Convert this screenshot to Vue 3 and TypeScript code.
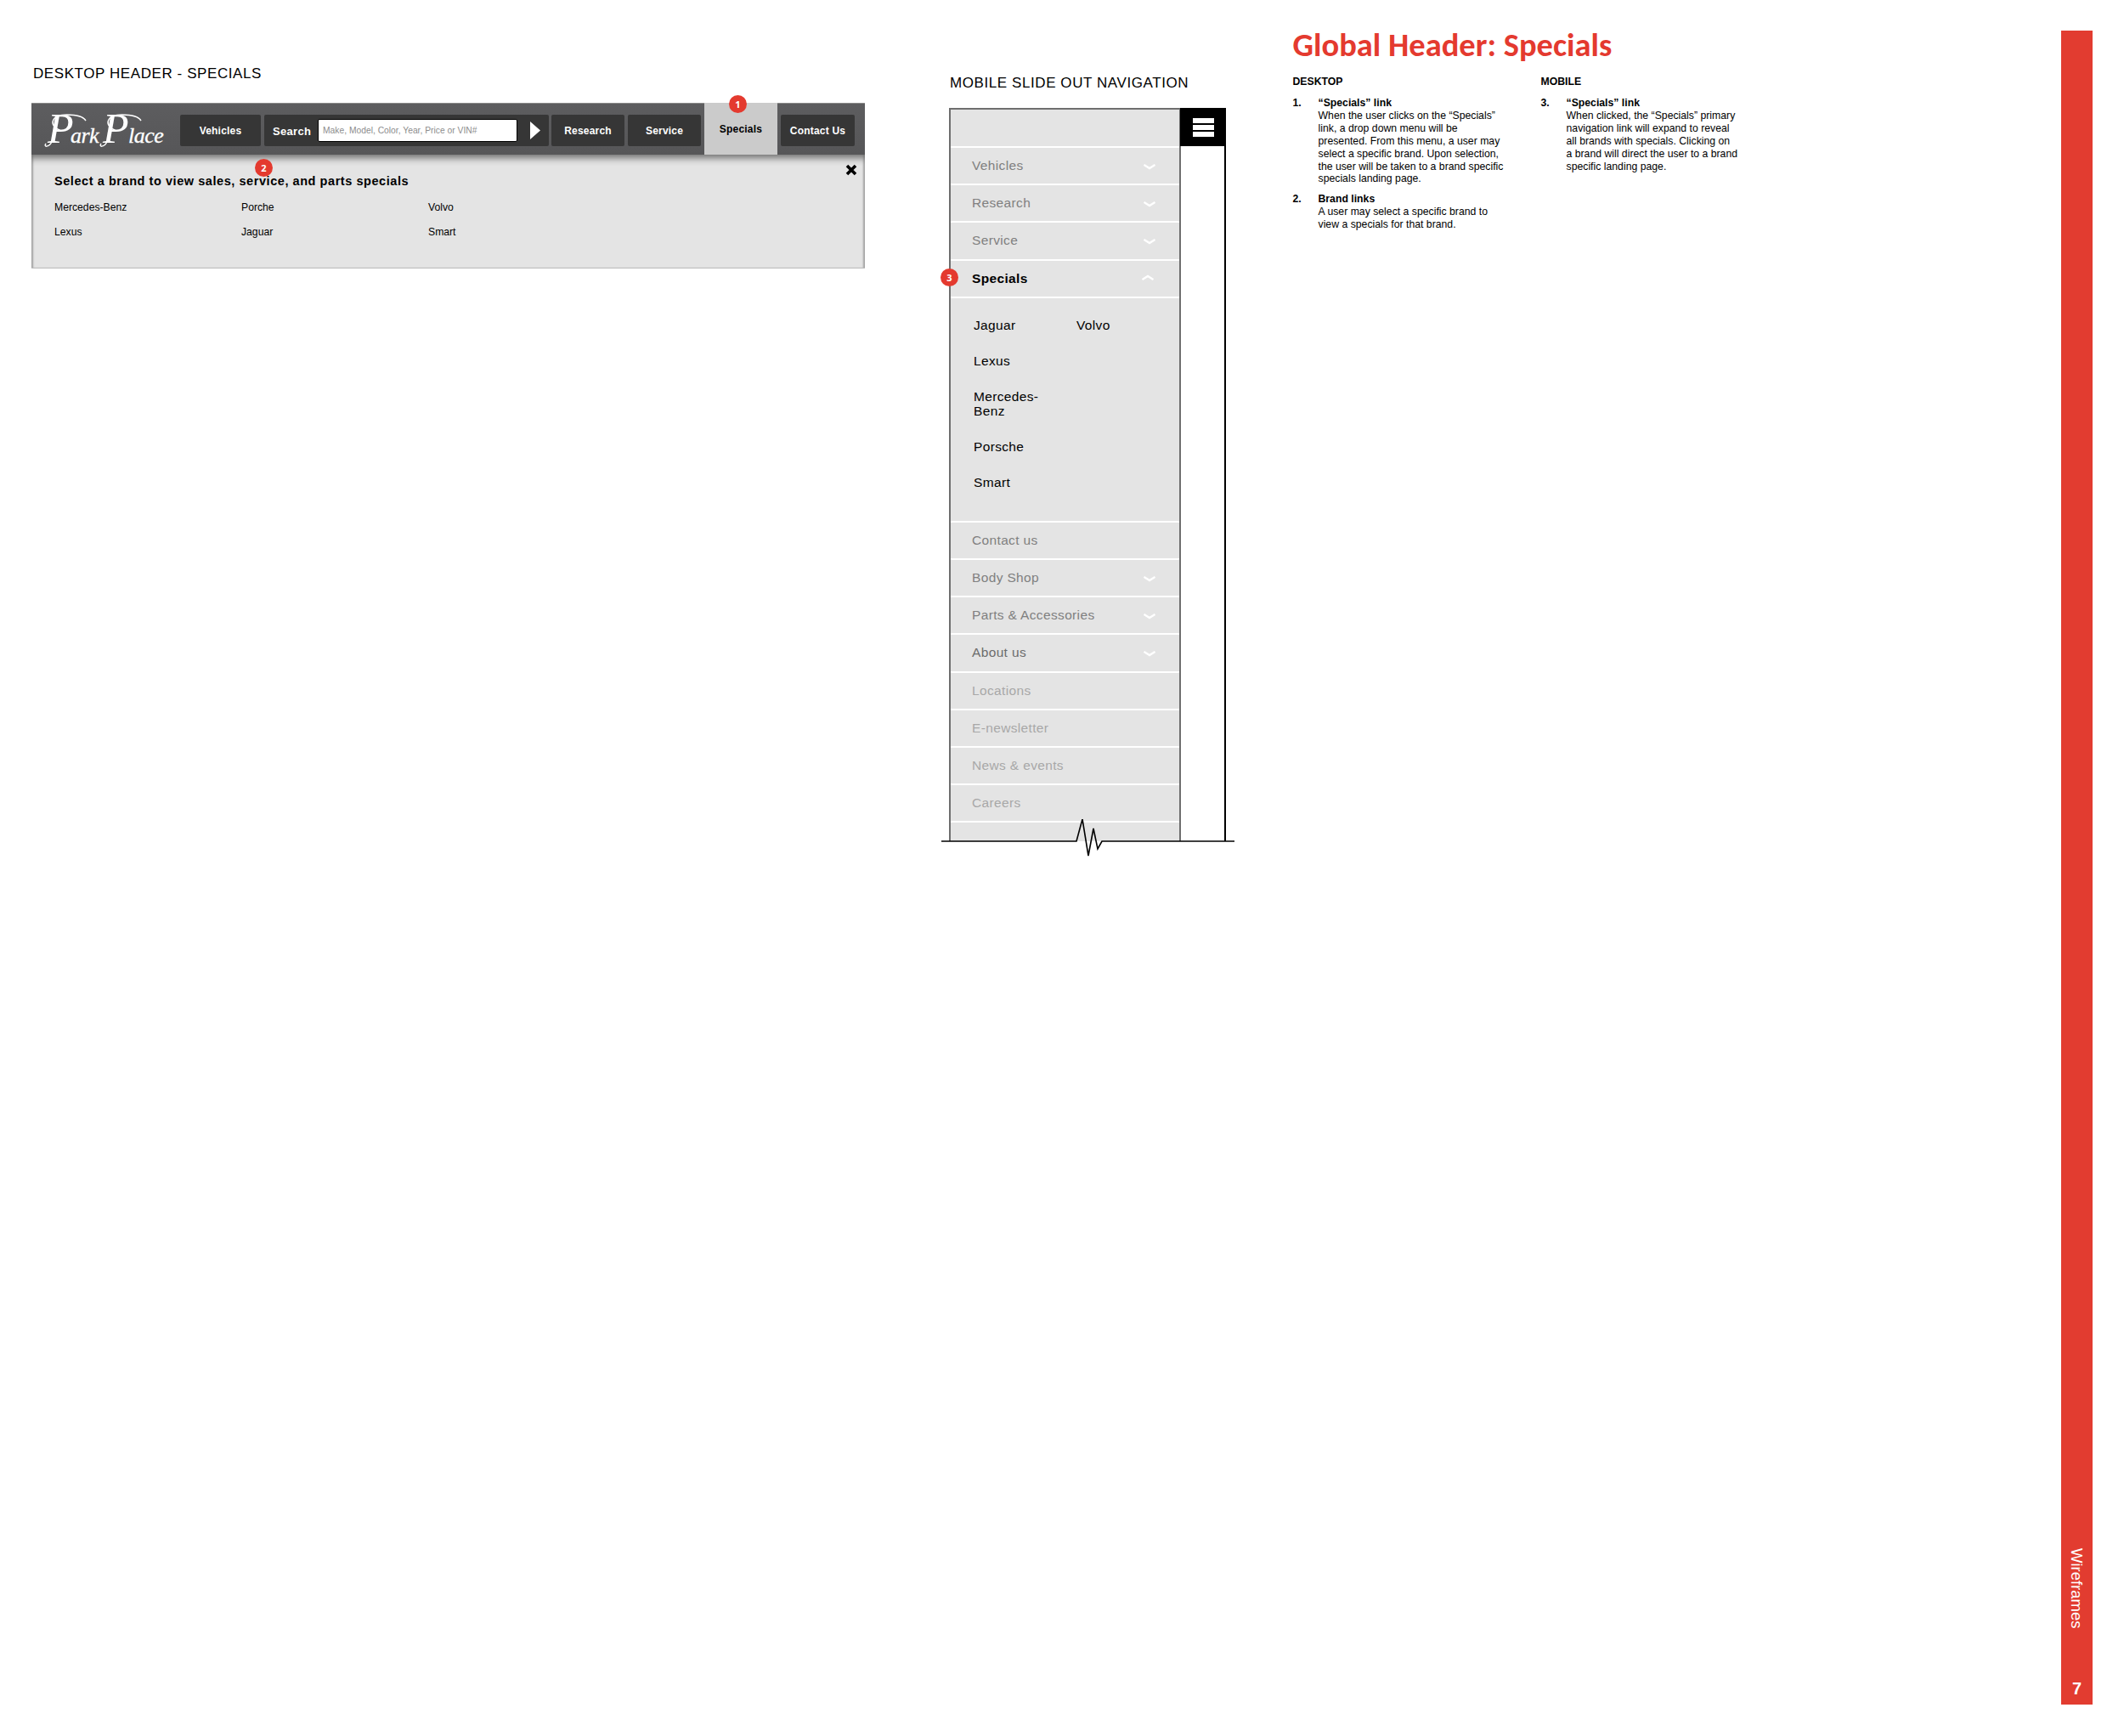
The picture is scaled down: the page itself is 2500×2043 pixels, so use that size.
<script setup lang="ts">
interface MenuRow {
  label: string
  tone: 'mid' | 'dark' | 'light'
  chevron: boolean
}

const topRows: MenuRow[] = [
  { label: 'Vehicles', tone: 'mid', chevron: true },
  { label: 'Research', tone: 'mid', chevron: true },
  { label: 'Service', tone: 'mid', chevron: true },
]

const bottomRows: MenuRow[] = [
  { label: 'Contact us', tone: 'mid', chevron: false },
  { label: 'Body Shop', tone: 'mid', chevron: true },
  { label: 'Parts & Accessories', tone: 'mid', chevron: true },
  { label: 'About us', tone: 'dark', chevron: true },
  { label: 'Locations', tone: 'light', chevron: false },
  { label: 'E-newsletter', tone: 'light', chevron: false },
  { label: 'News & events', tone: 'light', chevron: false },
  { label: 'Careers', tone: 'light', chevron: false },
]

const brands = ['Mercedes-Benz', 'Porche', 'Volvo', 'Lexus', 'Jaguar', 'Smart']
</script>

<template>
  <div class="page">
    <section class="desktop">
      <h2 class="caption">DESKTOP HEADER - SPECIALS</h2>
      <div class="site-header">
        <div class="bar">
          <div class="logo">
            <svg class="logo-svg" viewBox="0 0 160 50" width="160" height="50">
              <path d="M21 27 C5 21 9 8 28 8 C38 8 46 9 50 15 M10 40 C6 47 0 46 3 42" class="swash" />
              <path d="M86 27 C70 21 74 8 93 8 C103 8 111 9 115 15 M75 40 C71 47 65 46 68 42" class="swash" />
              <text x="5" y="41" class="logo-text logo-cap">P</text>
              <text x="32" y="41" class="logo-text">ark</text>
              <text x="70" y="41" class="logo-text logo-cap">P</text>
              <text x="100" y="41" class="logo-text">lace</text>
            </svg>
          </div>
          <a class="nav-btn w-vehicles">Vehicles</a>
          <div class="search">
            <span class="search-label">Search</span>
            <span class="search-input">Make, Model, Color, Year, Price or VIN#</span>
            <svg class="go" viewBox="0 0 12 21" width="12" height="21"><path d="M0 0 L12 10.5 L0 21 Z" fill="#fff" /></svg>
          </div>
          <a class="nav-btn w-research">Research</a>
          <a class="nav-btn w-service">Service</a>
          <a class="nav-active">Specials<span class="badge badge-one">1</span></a>
          <a class="nav-btn w-contact">Contact Us</a>
        </div>
        <div class="dropdown">
          <span class="badge badge-two">2</span>
          <svg class="close" viewBox="0 0 14 14" width="14" height="14"><path d="M2 2 L12 12 M12 2 L2 12" stroke="#000" stroke-width="3.6" /></svg>
          <h3 class="dropdown-title">Select a brand to view sales, service, and parts specials</h3>
          <ul class="brand-grid">
            <li v-for="b in brands" :key="b">{{ b }}</li>
          </ul>
        </div>
      </div>
    </section>

    <section class="mobile">
      <h2 class="caption">MOBILE SLIDE OUT NAVIGATION</h2>
      <div class="phone">
        <div class="drawer">
          <div class="drawer-top"></div>
          <div v-for="r in topRows" :key="r.label" class="row" :class="r.tone">
            {{ r.label }}
            <svg v-if="r.chevron" class="chev" viewBox="0 0 14 7" width="14" height="7"><path d="M0.5 1 L7 5 L13.5 1" /></svg>
          </div>
          <div class="row open">
            Specials
            <svg class="chev" viewBox="0 0 14 7" width="14" height="7"><path d="M0.5 6 L7 2 L13.5 6" /></svg>
            <span class="badge badge-three">3</span>
          </div>
          <div class="sub">
            <div class="sub-first"><span>Jaguar</span><span>Volvo</span></div>
            <div>Lexus</div>
            <div class="sub-wrap">Mercedes-<br />Benz</div>
            <div>Porsche</div>
            <div>Smart</div>
          </div>
          <div v-for="r in bottomRows" :key="r.label" class="row" :class="r.tone">
            {{ r.label }}
            <svg v-if="r.chevron" class="chev" viewBox="0 0 14 7" width="14" height="7"><path d="M0.5 1 L7 5 L13.5 1" /></svg>
          </div>
        </div>
        <div class="side">
          <div class="burger"><i></i><i></i><i></i></div>
        </div>
        <svg class="tear" viewBox="0 0 345 44" width="345" height="44">
          <path d="M0 26 H159 L166 0 L173 43 L179 11 L184 35 L189 26 H345" />
        </svg>
      </div>
    </section>

    <section class="notes">
      <h1 class="notes-title">Global Header: Specials</h1>
      <div class="notes-cols">
        <div class="col col-left">
          <h4>DESKTOP</h4>
          <div class="note">
            <b>1.</b>
            <p><strong>“Specials” link</strong><br />When the user clicks on the “Specials”<br />link, a drop down menu will be<br />presented. From this menu, a user may<br />select a specific brand. Upon selection,<br />the user will be taken to a brand specific<br />specials landing page.</p>
          </div>
          <div class="note">
            <b>2.</b>
            <p><strong>Brand links</strong><br />A user may select a specific brand to<br />view a specials for that brand.</p>
          </div>
        </div>
        <div class="col">
          <h4>MOBILE</h4>
          <div class="note">
            <b>3.</b>
            <p><strong>“Specials” link</strong><br />When clicked, the “Specials” primary<br />navigation link will expand to reveal<br />all brands with specials. Clicking on<br />a brand will direct the user to a brand<br />specific landing page.</p>
          </div>
        </div>
      </div>
    </section>

    <aside class="tab">
      <span class="tab-label">Wireframes</span>
      <span class="tab-num">7</span>
    </aside>
  </div>
</template>

<style>
html, body { margin: 0; background: #fff; }
</style>

<style scoped>
.page {
  position: relative;
  display: flex;
  width: 2500px;
  height: 2043px;
  overflow: hidden;
  background: #fff;
  font-family: "Liberation Sans", Arial, sans-serif;
  color: #000;
}
.caption {
  margin: 0;
  font-size: 17px;
  font-weight: 400;
  line-height: 20px;
  letter-spacing: 0.58px;
  white-space: nowrap;
}

/* desktop header */
.desktop {
  width: 981px;
  margin-left: 37px;
  padding-top: 77px;
}
.desktop .caption { padding-left: 2px; }
.site-header { margin-top: 24px; }
.bar {
  display: flex;
  align-items: flex-start;
  height: 61px;
  padding-left: 175px;
  position: relative;
  box-sizing: border-box;
  border-top: 1px solid #8a8a8a;
  background: linear-gradient(#5d5d5f, #565658);
}
.logo { position: absolute; left: 14px; top: 5px; }
.logo-svg { overflow: visible; }
.swash { fill: none; stroke: #fff; stroke-width: 1.5; }
.logo-text {
  fill: #fff;
  font-family: "Liberation Serif", serif;
  font-style: italic;
  font-size: 26px;
  letter-spacing: -0.5px;
  stroke: #fff;
  stroke-width: 0.3;
}
.logo-cap { font-size: 50px; stroke-width: 0; }
.nav-btn {
  display: flex;
  align-items: center;
  justify-content: center;
  height: 37px;
  margin-top: 13px;
  border-radius: 2px;
  background: #363636;
  color: #fff;
  font-size: 12px;
  font-weight: 700;
  letter-spacing: 0.2px;
}
.w-vehicles { width: 95px; margin-right: 4px; }
.w-research { width: 86px; margin-left: 3px; margin-right: 4px; }
.w-service { width: 86px; margin-right: 4px; }
.w-contact { width: 87px; margin-left: 4px; }
.search {
  display: flex;
  align-items: center;
  width: 335px;
  height: 37px;
  margin-top: 13px;
  border-radius: 2px;
  background: #363636;
  color: #fff;
}
.search-label {
  width: 63px;
  padding-left: 10px;
  padding-top: 1px;
  box-sizing: border-box;
  font-size: 13px;
  font-weight: 700;
  letter-spacing: 0.3px;
}
.search-input {
  width: 235px;
  height: 27px;
  box-sizing: border-box;
  padding-left: 5px;
  border: 1px solid #000;
  border-radius: 2px;
  background: #fff;
  color: #8d8d8d;
  font-size: 10.3px;
  line-height: 26px;
  white-space: nowrap;
}
.go { margin-left: 15px; }
.nav-active {
  position: relative;
  display: flex;
  align-items: flex-start;
  justify-content: center;
  width: 86px;
  height: 62px;
  margin-top: -1px;
  padding-top: 24px;
  box-sizing: border-box;
  background: #cbcbcb;
  color: #000;
  font-size: 12px;
  font-weight: 700;
  letter-spacing: 0.2px;
}
.badge {
  position: absolute;
  width: 21px;
  height: 21px;
  border-radius: 50%;
  background: #e43a2f;
  color: #fff;
  font-family: "Open Sans", sans-serif;
  font-size: 11px;
  font-weight: 700;
  line-height: 21px;
  text-align: center;
}
.badge-one { left: 29px; top: -9px; }
.badge-two { left: 263px; top: 5px; }
.badge-three { left: -12px; top: 9px; }
.dropdown {
  position: relative;
  height: 134px;
  box-sizing: border-box;
  padding: 21px 27px 0;
  background: #e4e4e4;
  border-bottom: 1px solid #bdbdbd;
  box-shadow: inset 0 10px 8px -6px #6e6e6e, inset 3px 0 2px -1px #a8a8a8, inset -3px 0 2px -1px #a8a8a8;
}
.close { position: absolute; right: 9px; top: 11px; }
.dropdown-title {
  margin: 0;
  font-size: 14.5px;
  font-weight: 700;
  line-height: 20px;
  letter-spacing: 0.56px;
  white-space: nowrap;
}
.brand-grid {
  display: grid;
  grid-template-columns: repeat(3, 220px);
  grid-auto-rows: 29px;
  margin: 7px 0 0;
  padding: 0;
  list-style: none;
  font-size: 12.2px;
  line-height: 29px;
}

/* mobile drawer */
.mobile {
  width: 404.5px;
  margin-left: 99px;
  padding-top: 88px;
}
.mobile .caption { padding-left: 1px; }
.phone {
  position: relative;
  display: flex;
  width: 326px;
  height: 863px;
  margin-top: 19px;
}
.drawer {
  width: 274px;
  height: 863px;
  box-sizing: border-box;
  border-left: 2px solid #6e6e6e;
  border-right: 2px solid #6e6e6e;
  border-top: 2px solid #6e6e6e;
  background: #e4e4e4;
}
.drawer-top { height: 43px; border-bottom: 2px solid #fff; }
.row {
  position: relative;
  display: flex;
  align-items: center;
  height: 42.2px;
  padding-left: 25px;
  border-bottom: 2px solid #fff;
  font-size: 15.5px;
  letter-spacing: 0.35px;
}
.mid { color: #808080; }
.dark { color: #6c6c6c; }
.light { color: #a8a8a8; }
.chev {
  position: absolute;
  left: 227px;
  top: 19px;
  fill: none;
  stroke: #fff;
  stroke-width: 2.4;
}
.open { color: #000; font-weight: 700; }
.open .chev { left: 225px; top: 16px; }
.sub {
  display: flex;
  flex-direction: column;
  gap: 25px;
  height: 264px;
  box-sizing: border-box;
  padding: 23px 0 0 27px;
  border-bottom: 2px solid #fff;
  color: #000;
  font-size: 15.5px;
  letter-spacing: 0.35px;
  line-height: 17px;
}
.sub-first span:first-child { display: inline-block; width: 121px; }
.side {
  position: relative;
  width: 53px;
  height: 863px;
  box-sizing: border-box;
  border-right: 2px solid #000;
}
.burger {
  display: flex;
  flex-direction: column;
  gap: 2px;
  height: 45px;
  margin-left: -1px;
  margin-right: -2px;
  padding: 12px 0 0 15px;
  box-sizing: border-box;
  background: #000;
}
.burger i {
  display: block;
  width: 25px;
  height: 6px;
  background: #fff;
}
.tear {
  position: absolute;
  left: -9px;
  top: 837px;
  fill: none;
  stroke: #000;
  stroke-width: 1.6;
}

/* notes column */
.notes {
  width: 700px;
  padding-top: 29px;
}
.notes-title {
  margin: 0;
  color: #e43a2f;
  font-family: Carlito, "Open Sans", sans-serif;
  font-size: 38.5px;
  font-weight: 700;
  line-height: 47px;
  white-space: nowrap;
}
.notes-cols {
  display: flex;
  margin-top: 8px;
  font-size: 12.25px;
  line-height: 14.9px;
}
.col-left { width: 292px; }
.col h4 {
  margin: 5px 0 10px;
  font-size: 12.25px;
  line-height: 15px;
}
.note { display: flex; margin-bottom: 9px; }
.note b { width: 30px; flex-shrink: 0; }
.note p { margin: 0; white-space: nowrap; }

/* red tab */
.tab {
  position: absolute;
  left: 2426px;
  top: 36px;
  width: 37px;
  height: 1970px;
  background: #e23c30;
  color: #fff;
}
.tab-label {
  position: absolute;
  left: 8px;
  top: 1786px;
  writing-mode: vertical-rl;
  font-size: 18.5px;
  line-height: 21px;
}
.tab-num {
  position: absolute;
  left: 0;
  right: 0;
  top: 1939px;
  font-size: 20px;
  font-weight: 700;
  line-height: 24px;
  text-align: center;
}
</style>
